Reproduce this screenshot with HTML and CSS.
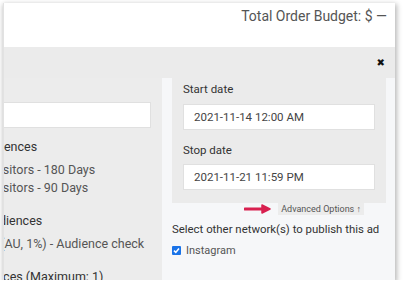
FILE: index.html
```html
<!DOCTYPE html>
<html lang="en">

<head>
    <meta charset="UTF-8">
    <title>Ad Order</title>
    <link rel="stylesheet" href="styles.css">
</head>

<body>

    <section class="modal">

        <header class="modal-head">
            <p class="budget">Total Order Budget: $ —</p>
        </header>

        <div class="modal-bar">
            <span class="luk">&#10006;</span>
        </div>

        <section class="modal-body">

            <div class="venstre">
                <div class="venstre-inner">
                    <div class="tekstfelt"></div>

                    <h3 class="overskrift">Saved Audiences</h3>
                    <p class="punkt">Website Visitors - 180 Days</p>
                    <p class="punkt">Website Visitors - 90 Days</p>

                    <h3 class="overskrift">Shared Audiences</h3>
                    <p class="punkt">Lookalike (AU, 1%) - Audience check</p>

                    <h3 class="overskrift sidste">Excluded Audiences (Maximum: 1)</h3>
                </div>
            </div>

            <div class="hoejre">
                <div class="kort">
                    <label class="felt-navn">Start date</label>
                    <div class="felt">2021-11-14 12:00 AM</div>

                    <label class="felt-navn stop">Stop date</label>
                    <div class="felt">2021-11-21 11:59 PM</div>
                </div>

                <div class="avanceret">
                    <svg class="pil" width="28" height="10" viewBox="0 0 28 10">
                        <path d="M1 5 H20" stroke="#d8204f" stroke-width="3" stroke-linecap="round" />
                        <path d="M18 1 L26 5 L18 9 Z" fill="#d8204f" stroke="#d8204f" stroke-width="1.5" stroke-linejoin="round" />
                    </svg>
                    <span class="chip">Advanced Options &#8593;</span>
                </div>

                <p class="netvaerk">Select other network(s) to publish this ad</p>

                <label class="valg">
                    <span class="boks">
                        <svg width="9" height="9" viewBox="0 0 9 9">
                            <path d="M2 4.6 L3.8 6.4 L7 2.6" fill="none" stroke="white" stroke-width="1.6" />
                        </svg>
                    </span>
                    Instagram
                </label>
            </div>

        </section>

    </section>

</body>

</html>
```

FILE: styles.css
```css
body {
    margin: 0;
    background-color: white;
    font-family: 'Roboto', sans-serif;
}

.modal {
    margin: 3px 0 0 3px;
    width: 392px;
    height: 277px;
    display: flex;
    flex-direction: column;
    overflow: hidden;
    box-shadow: 1px 2px 5px 1px rgba(0, 0, 0, 0.28);
    border-left: 1px solid #e2e2e2;
    box-sizing: border-box;
}

.modal-head {
    height: 44px;
    background-color: white;
    display: flex;
    justify-content: flex-end;
}

.budget {
    margin: 5px 8px 0 0;
    font-size: 14px;
    color: #555;
}

.modal-bar {
    height: 31px;
    background-color: #ebebeb;
    display: flex;
    justify-content: flex-end;
    align-items: center;
    padding-right: 10px;
}

.luk {
    font-size: 10px;
    color: #111;
    font-family: 'DejaVu Sans', sans-serif;
}

.modal-body {
    flex: 1;
    display: grid;
    grid-template-columns: 158px 1fr;
    min-height: 0;
}

.venstre {
    background-color: #ececec;
    overflow: hidden;
}

.venstre-inner {
    margin-left: -88px;
    padding-top: 24px;
    white-space: nowrap;
}

.tekstfelt {
    height: 26px;
    margin-left: 85px;
    width: 150px;
    background-color: white;
    border: 1px solid #e0e0e0;
    box-sizing: border-box;
}

.overskrift {
    margin: 16px 0 6px 0;
    padding-left: 26px;
    font-size: 12.5px;
    font-weight: normal;
    color: #333;
    line-height: 16px;
}

.tekstfelt + .overskrift {
    margin-top: 11px;
}

.sidste {
    padding-left: 0;
    margin-left: -5px;
}

.punkt {
    margin: 0;
    padding-left: 28px;
    font-size: 12.5px;
    color: #555;
    line-height: 18px;
}

.hoejre {
    background-color: #f6f7f9;
    padding: 0 9px 0 10px;
}

.kort {
    background-color: #ebebeb;
    padding: 3px 11px 13px 11px;
}

.felt-navn {
    display: block;
    font-size: 11.5px;
    color: #333;
    line-height: 16px;
    margin-bottom: 7px;
}

.felt-navn.stop {
    margin-top: 12px;
    margin-bottom: 6px;
}

.felt {
    height: 26px;
    background-color: white;
    border: 1px solid #e0e0e0;
    box-sizing: border-box;
    padding-left: 10px;
    font-size: 11.5px;
    color: #444;
    line-height: 24px;
}

.avanceret {
    display: flex;
    justify-content: flex-end;
    align-items: center;
    gap: 6px;
    padding-right: 22px;
}

.chip {
    background-color: #ececec;
    font-size: 9px;
    color: #555;
    padding: 1px 3px;
    line-height: 10px;
}

.netvaerk {
    margin: 6px 0 7px 0;
    font-size: 11.4px;
    color: #333;
    line-height: 16px;
    white-space: nowrap;
}

.valg {
    display: flex;
    align-items: center;
    gap: 5px;
    font-size: 11px;
    color: #555;
}

.boks {
    width: 9px;
    height: 9px;
    background-color: #1a73e8;
    border-radius: 1px;
    display: flex;
}
```
